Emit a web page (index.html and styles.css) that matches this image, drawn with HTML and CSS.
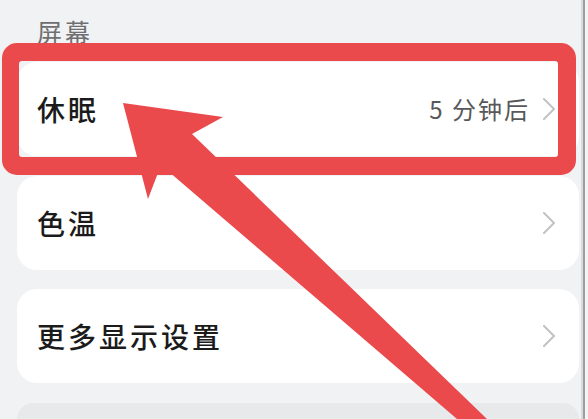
FILE: index.html
```html
<!DOCTYPE html>
<html lang="zh-CN">
<head>
<meta charset="utf-8">
<title>屏幕</title>
<link rel="stylesheet" href="styles.css">
</head>
<body>
<div class="page">
  <main class="content">
    <div class="section-title">屏幕</div>
    <div class="list">
      <div class="card">
        <span class="label">休眠</span>
        <span class="value">5 分钟后</span>
        <svg class="chev" width="14" height="22" viewBox="0 0 14 22"><polyline points="2,1 12,11 2,21" fill="none" stroke="#c2c2c4" stroke-width="2" stroke-linecap="round" stroke-linejoin="round"/></svg>
      </div>
      <div class="card">
        <span class="label">色温</span>
        <svg class="chev" width="14" height="22" viewBox="0 0 14 22"><polyline points="2,1 12,11 2,21" fill="none" stroke="#c2c2c4" stroke-width="2" stroke-linecap="round" stroke-linejoin="round"/></svg>
      </div>
      <div class="card">
        <span class="label">更多显示设置</span>
        <svg class="chev" width="14" height="22" viewBox="0 0 14 22"><polyline points="2,1 12,11 2,21" fill="none" stroke="#c2c2c4" stroke-width="2" stroke-linecap="round" stroke-linejoin="round"/></svg>
      </div>
      <div class="card-muted"></div>
    </div>
  </main>
  <div class="edge"></div>
</div>
<svg class="annotation" width="588" height="419" viewBox="0 0 588 419">
  <path fill="#eb4a4d" fill-rule="evenodd" d="M17,43 H561 A15,15 0 0 1 576,58 V160 A15,15 0 0 1 561,175 H17 A15,15 0 0 1 2,160 V58 A15,15 0 0 1 17,43 Z M22,61 A3,3 0 0 0 19,64 V154 A3,3 0 0 0 22,157 H555 A3,3 0 0 0 558,154 V64 A3,3 0 0 0 555,61 Z"/>
  <polygon fill="#eb4a4d" points="123,103 223,117 192,134 487,419 457,419 161,165 148,199"/>
</svg>
</body>
</html>
```

FILE: styles.css
```css
html, body {
  margin: 0;
  padding: 0;
}
body {
  width: 588px;
  height: 419px;
  overflow: hidden;
  background: #f1f2f4;
  font-family: "Noto Sans CJK SC", "Noto Sans", sans-serif;
  position: relative;
}
.page {
  display: flex;
  height: 419px;
}
.content {
  width: 562px;
  padding-left: 17px;
}
.edge {
  flex: 1;
  background: linear-gradient(to right, #f1f2f4 0 2px, #dadadc 2px 4px, #9e9ea0 4px 6px, #f4f4f5 6px);
}
.section-title {
  padding-top: 19px;
  padding-left: 20px;
  font-size: 25px;
  line-height: 25px;
  letter-spacing: 3px;
  color: #6f6f71;
  margin-bottom: 18px;
}
.list {
  display: flex;
  flex-direction: column;
  gap: 19.5px;
}
.card {
  height: 94px;
  background: #ffffff;
  border-radius: 20px;
  display: flex;
  align-items: center;
  padding: 0 23px 0 20px;
}
.card-muted {
  height: 16px;
  background: #e8e9eb;
  border-radius: 20px 20px 0 0;
}
.label {
  flex: 1;
  font-size: 28px;
  line-height: 28px;
  letter-spacing: 3px;
  font-weight: 500;
  color: #1b1b1b;
}
.value {
  font-size: 24px;
  line-height: 24px;
  letter-spacing: 2px;
  color: #58585a;
  margin-right: 12px;
}
.chev {
  display: block;
  flex: none;
}
.annotation {
  position: absolute;
  left: 0;
  top: 0;
}
```
